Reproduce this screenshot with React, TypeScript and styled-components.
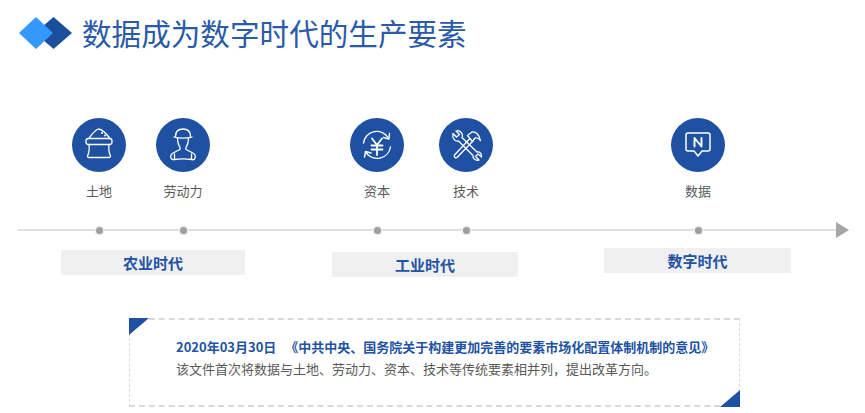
import React from "react";
import styled, { createGlobalStyle } from "styled-components";

const Global = createGlobalStyle`
  html, body { margin: 0; padding: 0; background: #fff; }
  body { font-family: "Noto Sans CJK SC", "Liberation Sans", sans-serif; overflow: hidden; }
`;

const Page = styled.div`
  width: 865px;
  height: 413px;
  box-sizing: border-box;
  overflow: hidden;
  display: flex;
  flex-direction: column;
`;

const Header = styled.header`
  display: flex;
  align-items: center;
  height: 66px;
  padding-left: 19px;
  gap: 10px;
`;

const Title = styled.h1`
  margin: 0;
  font-size: 29.6px;
  font-weight: 400;
  line-height: 40px;
  color: #2a5aa8;
  white-space: nowrap;
`;

const IconRow = styled.div`
  display: flex;
  margin-top: 52px;
  height: 96px;
`;

const Factor = styled.div<{ $left: number }>`
  width: 54px;
  margin-left: ${(p) => p.$left}px;
  display: flex;
  flex-direction: column;
  align-items: center;
  flex: none;
`;

const Disc = styled.div`
  width: 54px;
  height: 54px;
  border-radius: 50%;
  background: #1f51a3;
  display: flex;
  align-items: center;
  justify-content: center;
`;

const FactorLabel = styled.div`
  margin-top: 10px;
  font-size: 13px;
  line-height: 18px;
  color: #595959;
  white-space: nowrap;
`;

const Axis = styled.div`
  position: relative;
  display: flex;
  align-items: center;
  height: 13px;
  margin-top: 10px;
  margin-left: 18px;
  width: 831px;
  &::before {
    content: "";
    position: absolute;
    left: 0;
    right: 10px;
    top: 5px;
    height: 2px;
    background: #e0e0e0;
  }
  &::after {
    content: "";
    position: absolute;
    right: 0;
    top: -2px;
    border-left: 13px solid #a6a6a6;
    border-top: 8px solid transparent;
    border-bottom: 8px solid transparent;
  }
`;

const Dot = styled.span<{ $left: number }>`
  position: relative;
  z-index: 1;
  flex: none;
  width: 7px;
  height: 7px;
  margin-left: ${(p) => p.$left}px;
  border-radius: 50%;
  background: #a0a0a0;
  box-shadow: 0 0 0 1.5px #ececec;
`;

const Eras = styled.div`
  display: flex;
  height: 37px;
`;

const Era = styled.div<{ $left: number; $top: number; $width: number }>`
  flex: none;
  width: ${(p) => p.$width}px;
  height: 25px;
  margin-left: ${(p) => p.$left}px;
  margin-top: ${(p) => p.$top}px;
  background: #f0f0f0;
  display: flex;
  align-items: center;
  justify-content: center;
  font-size: 15px;
  font-weight: 700;
  color: #2252a4;
`;

const Note = styled.section`
  position: relative;
  box-sizing: border-box;
  width: 611px;
  height: 89px;
  margin-left: 129px;
  margin-top: 44px;
  padding: 16px 0 0 46px;
  border: 1px dashed #d9d9d9;
  border-width: 2px 1.5px;
`;

const NoteTitle = styled.div`
  font-size: 13px;
  line-height: 22px;
  font-weight: 700;
  color: #2252a4;
  white-space: nowrap;
`;

const NoteBody = styled.div`
  font-size: 13px;
  line-height: 24px;
  margin-top: -1px;
  color: #595959;
  white-space: nowrap;
`;

const Corner = styled.span<{ $end?: boolean }>`
  position: absolute;
  width: 20px;
  height: 17px;
  background: #1f51a3;
  ${(p) =>
    p.$end
      ? "right: -1px; bottom: -2px; clip-path: polygon(100% 0, 100% 100%, 0 100%);"
      : "left: -1px; top: -2px; clip-path: polygon(0 0, 100% 0, 0 100%);"}
`;

const stroke = {
  width: 42,
  height: 42,
  viewBox: "0 0 42 42",
  fill: "none",
  stroke: "#fff",
  strokeWidth: 1.3,
  strokeLinecap: "round" as const,
  strokeLinejoin: "round" as const,
};

const LandIcon = () => (
  <svg {...stroke}>
    <path d="M10.5 14.5 C13 12 16 6.5 20.5 5 C25 5.5 29 10.5 32 14.5" />
    <rect x="8" y="14.5" width="26" height="6" rx="2.5" />
    <path d="M11 20.5 C11.5 25 11 29 9.5 32 C9.3 33 10 33.5 11 33.5 L31 33.5 C32 33.5 32.7 33 32.5 32 C31 29 30.5 25 31 20.5" />
    <circle cx="24" cy="9" r="1" fill="#fff" stroke="none" />
    <circle cx="27" cy="11.5" r="1" fill="#fff" stroke="none" />
  </svg>
);

const WorkerIcon = () => (
  <svg {...stroke}>
    <path d="M13.5 12.5 C13.5 7.5 16.5 5 21 5 C25.5 5 28.5 7.5 28.5 12.5" />
    <path d="M12 13 C16 14.5 26 14.5 30 13" />
    <path d="M15.5 14.5 C15.5 19 17 22 18 23.5 V25.5 L12 28.5 C9 30 8 32 9 34 C9.5 35.5 11 36 12.5 35.5 C16 35 26 35 29.5 35.5 C31 36 32.5 35.5 33 34 C34 32 33 30 30 28.5 L24 25.5 V23.5 C25 22 26.5 19 26.5 14.5" />
    <path d="M12.5 30 V35 M29.5 30 V35" />
  </svg>
);

const CapitalIcon = () => (
  <svg {...stroke}>
    <path d="M7.5 19 A13.5 13.5 0 0 1 32.5 14" strokeWidth="1.4" />
    <path d="M33.5 9.5 L33 15 L27.5 13.5" strokeWidth="1.4" />
    <path d="M34.5 23 A13.5 13.5 0 0 1 10 28.5" strokeWidth="1.4" />
    <path d="M8.5 33 L9.5 27.5 L15 29" strokeWidth="1.4" />
    <path d="M16 14.5 L21 21 L26 14.5" strokeWidth="1.8" />
    <path d="M15.5 21.5 H26.5 M15.5 25.5 H26.5 M21 21 V31" strokeWidth="1.8" />
  </svg>
);

const ToolsIcon = () => (
  <svg {...stroke}>
    <path d="M8 9.5 L11.5 13 L14.5 10.5 L11 7 C14 6 17.5 8 17.5 12 L17 13.5 L32 28 C35 27.5 37 30 36.5 33 L33 30 L30.5 32.5 L34 36 C30.5 37 27.5 34.5 28 31.5 L13.5 17 C10 18 7 14 8 9.5 Z" />
    <path d="M24.5 15 L9.5 31 C8.5 32.5 10.5 34.5 12 33.5 L27.5 17.5" />
    <path d="M22.5 11.5 L27 8 C31 7.5 34.5 11 35.5 16.5 C33.5 14 31.5 13.5 30 14 L27.5 17.5 Z" />
  </svg>
);

const DataIcon = () => (
  <svg {...stroke}>
    <path d="M11 9 H31 C32.2 9 33 9.8 33 11 V25 C33 26.2 32.2 27 31 27 H25 L21 32 L17 27 H11 C9.8 27 9 26.2 9 25 V11 C9 9.8 9.8 9 11 9 Z" strokeWidth="1.5" />
    <path d="M17.5 22.5 V14 L24.5 22.5 V14" strokeWidth="1.9" />
  </svg>
);

const LogoMark = () => (
  <svg width="53" height="32" viewBox="0 0 53 32">
    <polygon points="34.5,0 53,16 34.5,32 16,16" fill="#1b4f9c" />
    <polygon points="17,0 34,16 17,32 0,16" fill="#3399ff" />
  </svg>
);

const factors = [
  { label: "土地", left: 72, icon: <LandIcon /> },
  { label: "劳动力", left: 30, icon: <WorkerIcon /> },
  { label: "资本", left: 140, icon: <CapitalIcon /> },
  { label: "技术", left: 35, icon: <ToolsIcon /> },
  { label: "数据", left: 178, icon: <DataIcon /> },
];

const dots = [78, 77, 187, 82, 225];

const eras = [
  { label: "农业时代", left: 61, top: 13, width: 184 },
  { label: "工业时代", left: 87, top: 15, width: 186 },
  { label: "数字时代", left: 86, top: 11, width: 187 },
];

const noteBody = "该文件首次将数据与土地、劳动力、资本、技术等传统要素相并列\uFF0C提出改革方向。";

export default function App() {
  return (
    <Page>
      <Global />
      <Header>
        <LogoMark />
        <Title>数据成为数字时代的生产要素</Title>
      </Header>
      <IconRow>
        {factors.map((f) => (
          <Factor key={f.label} $left={f.left}>
            <Disc>{f.icon}</Disc>
            <FactorLabel>{f.label}</FactorLabel>
          </Factor>
        ))}
      </IconRow>
      <Axis>
        {dots.map((d, i) => (
          <Dot key={i} $left={d} />
        ))}
      </Axis>
      <Eras>
        {eras.map((e) => (
          <Era key={e.label} $left={e.left} $top={e.top} $width={e.width}>
            {e.label}
          </Era>
        ))}
      </Eras>
      <Note>
        <Corner />
        <NoteTitle>2020年03月30日&nbsp;&nbsp;&nbsp;《中共中央、国务院关于构建更加完善的要素市场化配置体制机制的意见》</NoteTitle>
        <NoteBody>{noteBody}</NoteBody>
        <Corner $end />
      </Note>
    </Page>
  );
}
